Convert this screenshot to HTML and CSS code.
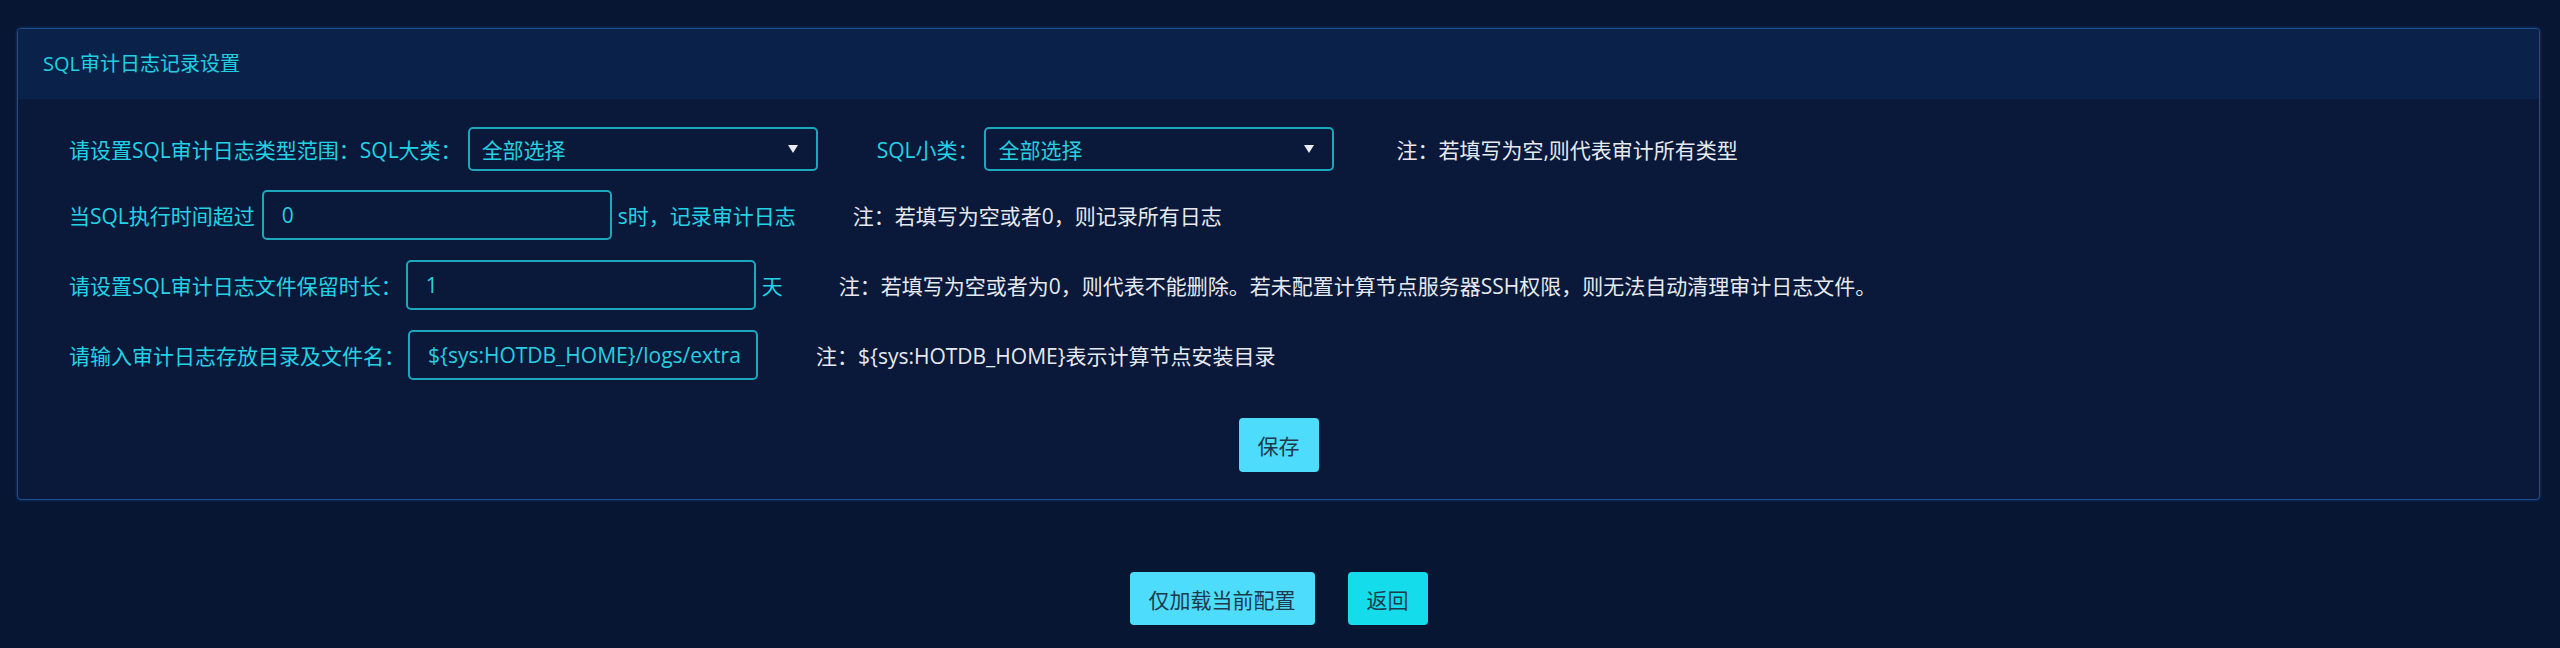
FILE: index.html
```html
<!DOCTYPE html>
<html lang="zh-CN">
<head>
<meta charset="utf-8">
<title>SQL审计日志记录设置</title>
<link rel="stylesheet" href="styles.css">
</head>
<body>
<div class="page">
  <section class="panel">
    <div class="panel-header">SQL审计日志记录设置</div>
    <div class="panel-body">
      <div class="row row-select">
        <span class="lbl">请设置SQL审计日志类型范围：SQL大类：</span>
        <div class="select">
          <span class="select-text">全部选择</span>
          <svg class="arrow" width="10" height="8" viewBox="0 0 10 8"><path d="M0 0 H10 L5 8 Z" fill="#e9edf2"/></svg>
        </div>
        <span class="lbl lbl-sub">SQL小类：</span>
        <div class="select">
          <span class="select-text">全部选择</span>
          <svg class="arrow" width="10" height="8" viewBox="0 0 10 8"><path d="M0 0 H10 L5 8 Z" fill="#e9edf2"/></svg>
        </div>
        <span class="note note-1">注：若填写为空,则代表审计所有类型</span>
      </div>
      <div class="row">
        <span class="lbl">当SQL执行时间超过</span>
        <div class="input input-tight">0</div>
        <span class="lbl unit-s">s时，记录审计日志</span>
        <span class="note note-2">注：若填写为空或者0，则记录所有日志</span>
      </div>
      <div class="row">
        <span class="lbl">请设置SQL审计日志文件保留时长：</span>
        <div class="input input-3">1</div>
        <span class="lbl unit-day">天</span>
        <span class="note note-3">注：若填写为空或者为0，则代表不能删除。若未配置计算节点服务器SSH权限，则无法自动清理审计日志文件。</span>
      </div>
      <div class="row">
        <span class="lbl">请输入审计日志存放目录及文件名：</span>
        <div class="input input-4">${sys:HOTDB_HOME}/logs/extra</div>
        <span class="note note-4">注：${sys:HOTDB_HOME}表示计算节点安装目录</span>
      </div>
      <div class="actions">
        <button class="btn">保存</button>
      </div>
    </div>
  </section>
  <div class="footer-actions">
    <button class="btn">仅加载当前配置</button>
    <button class="btn btn-alt">返回</button>
  </div>
</div>
</body>
</html>
```

FILE: styles.css
```css
* { box-sizing: border-box; }
html, body {
  margin: 0;
  padding: 0;
  background: #071633;
}
body {
  font-family: "Open Sans", "Noto Sans CJK SC", sans-serif;
  font-size: 21px;
  color: #22d3e6;
}
.page {
  width: 2560px;
  height: 648px;
  padding: 28px 20px 0 17px;
}
.panel {
  border: 1px solid #1c4f91;
  border-radius: 4px;
  box-shadow: 0 0 3px rgba(40, 110, 200, 0.55);
  background: #0a1839;
  overflow: hidden;
}
.panel-header {
  height: 70px;
  line-height: 70px;
  padding-left: 25px;
  background: #0a2249;
  color: #1fd0e3;
  font-size: 20px;
}
.panel-body {
  padding: 28px 0 27px 0;
}
.row {
  display: flex;
  align-items: center;
  height: 50px;
  margin-bottom: 20px;
  padding-left: 51px;
  white-space: nowrap;
}
.row-select {
  height: 44px;
  margin-bottom: 19px;
}
.lbl {
  color: #22d3e6;
}
.lbl-sub {
  margin-left: 59px;
}
.select {
  width: 350px;
  height: 44px;
  margin-left: 6px;
  border: 2px solid #1aa8bd;
  border-radius: 5px;
  display: flex;
  align-items: center;
  justify-content: space-between;
  padding: 0 18px 0 12px;
  color: #27cfe0;
}
.arrow { display: block; }
.input {
  width: 350px;
  height: 50px;
  border: 2px solid #1aa8bd;
  border-radius: 5px;
  display: flex;
  align-items: center;
  padding-left: 18px;
  color: #27cfe0;
  overflow: hidden;
}
.input-tight { margin-left: 7px; }
.input-3 { margin-left: 4px; }
.input-4 { margin-left: 3px; }
.unit-s { margin-left: 6px; }
.unit-day { margin-left: 6px; }
.note {
  color: #e6eaf0;
  font-size: 21px;
  margin-left: 56px;
}
.note-1 { margin-left: 62px; }
.note-2 { margin-left: 57px; }
.note-4 { margin-left: 58px; }
.actions {
  display: flex;
  justify-content: center;
  padding-top: 18px;
}
.btn {
  height: 54px;
  padding: 0 19px;
  border: none;
  border-radius: 4px;
  background: #4ddcfb;
  color: #1e3a4c;
  font-family: "Open Sans", "Noto Sans CJK SC", sans-serif;
  font-size: 21px;
  cursor: pointer;
}
.footer-actions {
  display: flex;
  justify-content: center;
  gap: 33px;
  margin-top: 72px;
}
.footer-actions .btn {
  height: 53px;
}
.btn-alt {
  background: #14dcea;
}
```
